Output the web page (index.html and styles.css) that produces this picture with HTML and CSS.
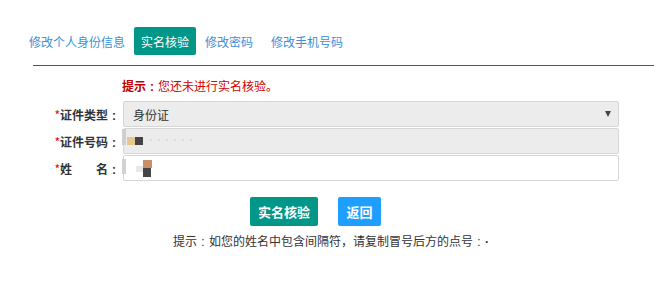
FILE: index.html
```html
<!DOCTYPE html>
<html lang="zh">
<head>
<meta charset="utf-8">
<title>实名核验</title>
<link rel="stylesheet" href="styles.css">
</head>
<body>
<nav class="tabs">
  <a class="tab">修改个人身份信息</a>
  <a class="tab active">实名核验</a>
  <a class="tab">修改密码</a>
  <a class="tab">修改手机号码</a>
</nav>
<div class="rule"></div>
<div class="form">
  <div class="notice"><b>提示<span class="c">:</span></b>您还未进行实名核验。</div>
  <div class="row">
    <label class="lbl"><span class="req">*</span>证件类型<span class="c">:</span></label>
    <div class="field select"><span class="val">身份证</span><span class="caret"></span></div>
  </div>
  <div class="row">
    <label class="lbl"><span class="req">*</span>证件号码<span class="c">:</span></label>
    <div class="field disabled">
      <svg class="mask" width="80" height="26" viewBox="0 0 80 26">
        <rect x="0" y="1" width="4" height="16" fill="#cfcfcf"/>
        <rect x="5" y="9" width="8" height="8" fill="#e6c88e"/>
        <rect x="13" y="9" width="8" height="8" fill="#444"/>
        <g fill="#dcdcdc"><rect x="28" y="11" width="2" height="2"/><rect x="36" y="11" width="2" height="2"/><rect x="44" y="11" width="2" height="2"/><rect x="52" y="11" width="2" height="2"/><rect x="60" y="11" width="2" height="2"/><rect x="68" y="11" width="2" height="2"/></g>
      </svg>
    </div>
  </div>
  <div class="row">
    <label class="lbl"><span class="req">*</span>姓&emsp;&emsp;名<span class="c">:</span></label>
    <div class="field">
      <svg class="mask" width="40" height="26" viewBox="0 0 40 26">
        <rect x="0" y="4" width="4" height="15" fill="#d2d2d2"/>
        <rect x="14" y="11" width="7" height="6" fill="#e8e8e8"/>
        <rect x="21" y="5" width="9" height="8" fill="#c98f6a"/>
        <rect x="21" y="13" width="8" height="9" fill="#454545"/>
      </svg>
    </div>
  </div>
  <div class="actions">
    <button class="btn green">实名核验</button>
    <button class="btn blue">返回</button>
  </div>
  <p class="tip">提示<span class="c">:</span>如您的姓名中包含间隔符，请复制冒号后方的点号<span class="c">:</span><span class="dot">·</span></p>
</div>
</body>
</html>
```
FILE: styles.css
```css
* { box-sizing: border-box; }
html, body { margin: 0; padding: 0; background: #fff; }
body {
  font-family: "Noto Sans CJK SC", "Noto Sans", "Liberation Sans", sans-serif;
  font-size: 12px;
  color: #333;
  width: 654px;
  height: 294px;
  overflow: hidden;
}
.c {
  display: inline-block;
  width: 12px;
  text-align: center;
  font-family: "Liberation Sans", sans-serif;
  font-weight: bold;
}
.dot { font-family: "Liberation Sans", sans-serif; font-weight: bold; }
.tabs {
  display: flex;
  gap: 2px;
  margin: 27px 0 0 22px;
  height: 28px;
}
.tab {
  display: flex;
  align-items: center;
  padding: 0 7px;
  height: 28px;
  color: #3d8fd8;
  font-size: 12px;
  border-radius: 2px;
}
.tab.active {
  background: #009688;
  color: #fff;
}
.tab:last-child { margin-left: 2px; }
.rule {
  margin: 10px 0 0 33px;
  height: 1px;
  background: #555;
}
.notice {
  margin: 12px 0 0 122px;
  line-height: 16px;
  color: #d40000;
}
.notice b { font-weight: bold; color: #c00000; }
.row {
  display: flex;
  align-items: center;
  height: 26px;
  margin-top: 1px;
}
.notice + .row { margin-top: 6px; }
.lbl {
  width: 120px;
  text-align: right;
  font-weight: bold;
  color: #333;
  white-space: nowrap;
}
.req { color: #e00; font-weight: normal; }
.field {
  margin-left: 3px;
  width: 496px;
  height: 26px;
  border: 1px solid #d6d6d6;
  background: #fff;
  display: flex;
  align-items: center;
  border-radius: 2px;
}
.field.select, .field.disabled { background: #ececec; }
.field.select .val { padding-left: 9px; color: #333; }
.caret {
  margin-left: auto;
  margin-right: 7px;
  width: 0; height: 0;
  border-left: 3px solid transparent;
  border-right: 3px solid transparent;
  border-top: 6px solid #444;
}
.mask { display: block; margin-left: -2px; align-self: flex-start; margin-top: -1px; }
.actions {
  display: flex;
  gap: 20px;
  margin: 16px 0 0 250px;
}
.btn {
  height: 29px;
  border: 0;
  border-radius: 2px;
  padding: 0;
  font-family: inherit;
  font-size: 13px;
  font-weight: bold;
  color: #fff;
  white-space: nowrap;
  text-align: center;
}
.btn.green { background: #009688; width: 68px; }
.btn.blue { background: #1e9fff; width: 43px; }
.tip {
  margin: 7px 0 0 173px;
  line-height: 16px;
  color: #333;
}
.tip .c { font-weight: normal; }
```
